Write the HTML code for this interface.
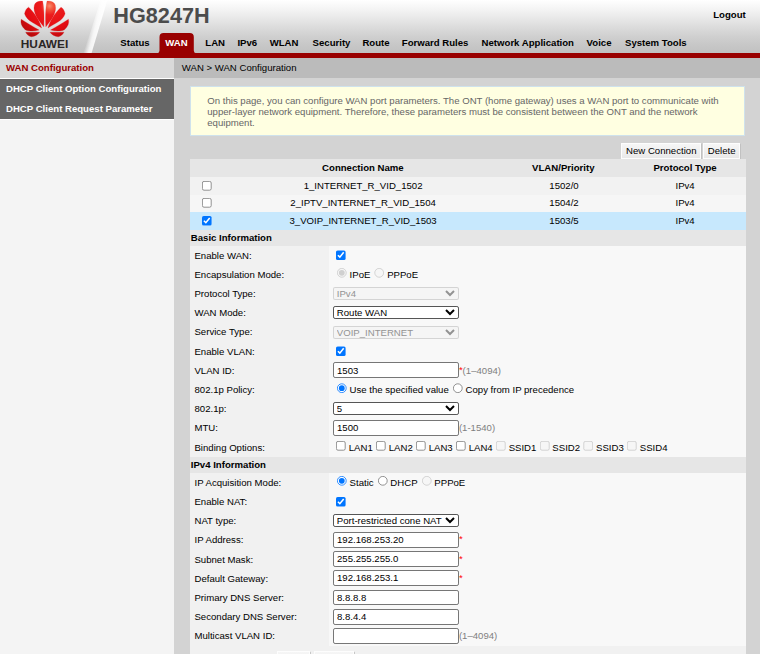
<!DOCTYPE html>
<html><head><meta charset="utf-8"><title>HG8247H</title>
<style>
*{box-sizing:border-box;margin:0;padding:0}
html,body{width:760px;height:654px;overflow:hidden;background:#d3d3d3}
body{font-family:"Liberation Sans",sans-serif;font-size:12px;color:#000}
#root{position:absolute;left:0;top:0;width:950px;height:818px;zoom:0.8;overflow:hidden;background:#d3d3d3;font-family:"Liberation Sans",sans-serif;font-size:12px;line-height:14px}
#root div,#root span.a,#root svg{position:absolute}
.t{white-space:nowrap;line-height:14px}
.b{font-weight:bold}
input,select,button{font-family:"Liberation Sans",sans-serif;font-size:12px;box-sizing:content-box}
.row{left:237.5px;width:694.5px;height:24px}
.row .l{left:0;top:0;width:173.5px;height:24px;background:#f1f1f1;padding-left:5.6px;line-height:24px;white-space:nowrap}
.row .v{left:173.5px;top:0;width:521px;height:24px;background:#f8f8f8;padding-left:5px;line-height:24px;white-space:nowrap}
.row .v input[type=text]{box-sizing:border-box;width:157.6px;height:19.6px;border:1.25px solid #767676;border-radius:2.6px;padding:0 0 1.2px 4px;vertical-align:top;margin-top:2.1px;background:#fff;color:#000;outline:none}
.row .v select:disabled{background-color:rgba(239,239,239,.3);border-color:rgba(118,118,118,.26);color:#939393;opacity:1}
.row .v select{width:158px;border-radius:2.6px;background-color:#fff;border:1px solid #555;color:#000;box-sizing:border-box;vertical-align:top;margin-top:4.06px}
.row .v input[type=radio]{vertical-align:top;margin:4px 3px 0 5px}
.row .v input[type=checkbox]{vertical-align:top;margin:5.75px 3px 0 4px}
.row .v.bind input[type=checkbox]{margin-top:4.25px}
.red{color:#f00;position:relative;top:-1.25px}
.gr{color:#808080}
.sec{left:237.5px;width:694.5px;height:20px;background:#e6e6e6;font-weight:bold;line-height:20px;padding-left:1px;white-space:nowrap}
.th{left:237.5px;width:694.5px;white-space:nowrap}
.th .c{top:0;height:100%;text-align:center}
.btn{background:linear-gradient(#f6f6f6,#e9e9e9);border:1px solid #fdfdfd;box-shadow:1px 1px 0 #bdbdbd;text-align:center;white-space:nowrap;line-height:14px}
</style></head><body>
<div id="root">
<div style="left:0px;top:0px;width:950px;height:66.25px;background:linear-gradient(to bottom,#ffffff 0%,#f3f3f3 19%,#e3e3e3 41.5%,#d8d8d8 56.6%,#cfcfcf 70%,#c7c7c7 85%,#c1c1c1 100%)"></div>
<svg style="left:0;top:0" width="150" height="66.25" viewBox="0 0 120 53"><defs><linearGradient id="sg" gradientUnits="userSpaceOnUse" x1="91.65" y1="26.5" x2="98.54" y2="28.36"><stop offset="0" stop-color="#fff" stop-opacity=".2"/><stop offset=".5" stop-color="#fff" stop-opacity=".78"/><stop offset="1" stop-color="#fff" stop-opacity=".9"/></linearGradient></defs><polygon points="100.6,0 107.4,0 91.6,53 83.7,53" fill="url(#sg)"/></svg>
<svg style="left:0;top:0" width="150" height="66.25" viewBox="0 0 120 53">
<defs>
<radialGradient id="lg" gradientUnits="userSpaceOnUse" cx="435" cy="75" r="430"><stop offset="0" stop-color="#f98a6c"/><stop offset=".1" stop-color="#f35a40"/><stop offset=".26" stop-color="#ec1d1d"/><stop offset=".7" stop-color="#e30b12"/><stop offset="1" stop-color="#bb0a0c"/></radialGradient>
</defs>
<g transform="translate(15,0) scale(0.0795)" fill="url(#lg)" stroke="url(#lg)" stroke-width="3" stroke-linejoin="round">
<path d="M362,338 C305,262 216,160 244,62 C254,28 300,8 347,14 C368,100 368,250 362,338Z"/>
<path d="M388,338 C445,262 534,160 506,62 C496,28 450,8 403,14 C382,100 382,250 388,338Z"/>
<path d="M335,352 C260,298 148,265 120,172 C126,135 146,103 171,90 C250,160 312,268 335,352Z"/>
<path d="M415,352 C490,298 602,265 630,172 C624,135 604,103 579,90 C500,160 438,268 415,352Z"/>
<path d="M303,378 C228,334 148,290 78,242 C66,290 83,336 128,373 C180,398 248,392 303,378Z"/>
<path d="M447,378 C522,334 602,290 672,242 C684,290 667,336 622,373 C570,398 502,392 447,378Z"/>
<path d="M310,405 L134,405 C150,437 178,457 206,463 C252,457 294,432 310,405Z"/>
<path d="M440,405 L616,405 C600,437 572,457 544,463 C498,457 456,432 440,405Z"/>
</g>
<text x="20.8" y="47.6" font-family="Liberation Sans, sans-serif" font-weight="bold" font-size="10" textLength="47.4" lengthAdjust="spacingAndGlyphs" fill="#2b2625">HUAWEI</text>
</svg>

<div class="t b" style="left:141.62px;top:5.11px;font-size:27.1px;line-height:30px;color:#4c4c4c">HG8247H</div>
<div class="t b" style="left:891.5px;top:11.84px;">Logout</div>
<svg style="left:193.75px;top:40px" width="55px" height="27.5px" viewBox="0 0 44 22"><path d="M0,21.2 L2.2,21.2 Q4.5,21 4.5,18.5 L4.5,5 Q4.5,1 8.5,1 L34.8,1 Q38.8,1 38.8,5 L38.8,18.5 Q38.8,21 41.1,21.2 L44,21.2 L44,22 L0,22 Z" fill="#990000"/></svg>
<div style="left:0px;top:66.25px;width:950px;height:6.25px;background:#990000"></div>
<div class="t b" style="left:150.38px;top:46.09px;">Status</div>
<div class="t b" style="left:206.62px;top:46.09px;color:#fff">WAN</div>
<div class="t b" style="left:256.62px;top:46.09px;">LAN</div>
<div class="t b" style="left:296.75px;top:46.09px;">IPv6</div>
<div class="t b" style="left:337.12px;top:46.09px;">WLAN</div>
<div class="t b" style="left:390.75px;top:46.09px;">Security</div>
<div class="t b" style="left:453px;top:46.09px;">Route</div>
<div class="t b" style="left:502.25px;top:46.09px;">Forward Rules</div>
<div class="t b" style="left:602px;top:46.09px;">Network Application</div>
<div class="t b" style="left:733.25px;top:46.09px;">Voice</div>
<div class="t b" style="left:781.25px;top:46.09px;">System Tools</div>
<div style="left:0px;top:72.5px;width:217.75px;height:745px;background:#f4f4f4"></div>
<div style="left:0px;top:72.5px;width:217.75px;height:24.5px;background:#d9d9d9"></div>
<div style="left:0px;top:97px;width:217.75px;height:1.75px;background:#fff"></div>
<div style="left:0px;top:98.75px;width:217.75px;height:49.75px;background:#666"></div>
<div style="left:0px;top:148.5px;width:217.75px;height:1.25px;background:#fff"></div>
<div class="t b" style="left:7.5px;top:77.59px;color:#990000">WAN Configuration</div>
<div class="t b" style="left:7.5px;top:103.97px;color:#fff">DHCP Client Option Configuration</div>
<div class="t b" style="left:7.5px;top:128.47px;color:#fff">DHCP Client Request Parameter</div>
<div style="left:217.75px;top:72.5px;width:732.25px;height:24.63px;background:#bbbbbb"></div>
<div class="t " style="left:227.25px;top:77.59px;">WAN &gt; WAN Configuration</div>
<div style="left:238px;top:107.5px;width:693.75px;height:62.5px;background:#ffffe1;border:1px solid #cfe2ec"></div>
<div class="t " style="left:259.12px;top:118.72px;color:#666">On this page, you can configure WAN port parameters. The ONT (home gateway) uses a WAN port to communicate with</div>
<div class="t " style="left:259.12px;top:132.59px;color:#666">upper-layer network equipment. Therefore, these parameters must be consistent between the ONT and the network</div>
<div class="t " style="left:259.12px;top:146.34px;color:#666">equipment.</div>
<div class="btn" style="left:776.62px;top:178.75px;width:100px;height:19.38px;padding-top:1.4px">New Connection</div>
<div class="btn" style="left:879.12px;top:178.75px;width:46px;height:19.38px;padding-top:1.4px">Delete</div>
<div class="th b" style="top:198.5px;height:22.50px;line-height:22.50px;background:#e6e6e6">
<div class="c" style="left:91.12px;width:250px">Connection Name</div>
<div class="c" style="left:341.62px;width:250px">VLAN/Priority</div>
<div class="c" style="left:493.88px;width:250px">Protocol Type</div>
</div>
<div style="left:237.5px;top:221px;width:694.5px;height:22.75px;background:#f2f2f2"></div>
<div style="left:237.5px;top:243.75px;width:694.5px;height:21.25px;background:#f6f6f6"></div>
<div class="th" style="top:221px;height:22.00px;line-height:22.00px;background:transparent">
<div class="c" style="left:91.38px;width:250px">1_INTERNET_R_VID_1502</div>
<div class="c" style="left:342.5px;width:250px">1502/0</div>
<div class="c" style="left:493.88px;width:250px">IPv4</div>
<input type="checkbox" style="position:absolute;left:14.88px;top:5.10px;margin:0">
</div>
<div class="th" style="top:243px;height:22.00px;line-height:22.00px;background:transparent">
<div class="c" style="left:91.38px;width:250px">2_IPTV_INTERNET_R_VID_1504</div>
<div class="c" style="left:342.5px;width:250px">1504/2</div>
<div class="c" style="left:493.88px;width:250px">IPv4</div>
<input type="checkbox" style="position:absolute;left:14.88px;top:4.20px;margin:0">
</div>
<div class="th" style="top:265px;height:22.00px;line-height:22.00px;background:#c7e8fd">
<div class="c" style="left:91.38px;width:250px">3_VOIP_INTERNET_R_VID_1503</div>
<div class="c" style="left:342.5px;width:250px">1503/5</div>
<div class="c" style="left:493.88px;width:250px">IPv4</div>
<input type="checkbox" checked style="position:absolute;left:14.88px;top:5.10px;margin:0">
</div>
<div class="sec" style="top:287px">Basic Information</div>
<div class="row" style="top:307px"><div class="l">Enable WAN:</div><div class="v"><input type="checkbox" checked></div></div>
<div class="row" style="top:331px"><div class="l">Encapsulation Mode:</div><div class="v"><input type="radio" checked disabled>IPoE<input type="radio" disabled>PPPoE</div></div>
<div class="row" style="top:355px"><div class="l">Protocol Type:</div><div class="v"><select disabled><option>IPv4</option></select></div></div>
<div class="row" style="top:379px"><div class="l">WAN Mode:</div><div class="v"><select><option>Route WAN</option></select></div></div>
<div class="row" style="top:403px"><div class="l">Service Type:</div><div class="v"><select disabled><option>VOIP_INTERNET</option></select></div></div>
<div class="row" style="top:427px"><div class="l">Enable VLAN:</div><div class="v"><input type="checkbox" checked></div></div>
<div class="row" style="top:451px"><div class="l">VLAN ID:</div><div class="v"><input type="text" value="1503" style="padding:0.6px 0 0 4px"><span class="red">*</span><span class="gr">(1&ndash;4094)</span></div></div>
<div class="row" style="top:475px"><div class="l">802.1p Policy:</div><div class="v"><input type="radio" checked>Use the specified value<input type="radio">Copy from IP precedence</div></div>
<div class="row" style="top:499px"><div class="l">802.1p:</div><div class="v"><select><option>5</option></select></div></div>
<div class="row" style="top:523px"><div class="l">MTU:</div><div class="v"><input type="text" value="1500"><span class="gr">(1-1540)</span></div></div>
<div class="row" style="top:547px"><div class="l">Binding Options:</div><div class="v bind"><input type="checkbox">LAN1<input type="checkbox">LAN2<input type="checkbox">LAN3<input type="checkbox">LAN4<input type="checkbox" disabled>SSID1<input type="checkbox" disabled>SSID2<input type="checkbox" disabled>SSID3<input type="checkbox" disabled>SSID4</div></div>
<div class="sec" style="top:571px">IPv4 Information</div>
<div class="row" style="top:591px"><div class="l">IP Acquisition Mode:</div><div class="v"><input type="radio" checked>Static<input type="radio">DHCP<input type="radio" disabled>PPPoE</div></div>
<div class="row" style="top:615px"><div class="l">Enable NAT:</div><div class="v"><input type="checkbox" checked></div></div>
<div class="row" style="top:639px"><div class="l">NAT type:</div><div class="v"><select><option>Port-restricted cone NAT</option></select></div></div>
<div class="row" style="top:663px"><div class="l">IP Address:</div><div class="v"><input type="text" value="192.168.253.20"><span class="red">*</span></div></div>
<div class="row" style="top:687px"><div class="l">Subnet Mask:</div><div class="v"><input type="text" value="255.255.255.0"><span class="red">*</span></div></div>
<div class="row" style="top:711px"><div class="l">Default Gateway:</div><div class="v"><input type="text" value="192.168.253.1"><span class="red">*</span></div></div>
<div class="row" style="top:735px"><div class="l">Primary DNS Server:</div><div class="v"><input type="text" value="8.8.8.8"></div></div>
<div class="row" style="top:759px"><div class="l">Secondary DNS Server:</div><div class="v"><input type="text" value="8.8.4.4"></div></div>
<div class="row" style="top:783px"><div class="l">Multicast VLAN ID:</div><div class="v"><input type="text" value=""><span class="gr">(1&ndash;4094)</span></div></div>
<div style="left:237.5px;top:807px;width:694.5px;height:10.5px;background:#f1f1f1"></div>
<div class="btn" style="left:346.38px;top:814px;width:41.75px;height:19px"></div>
<div class="btn" style="left:392.62px;top:814px;width:49.62px;height:19px"></div>
</div></body></html>
